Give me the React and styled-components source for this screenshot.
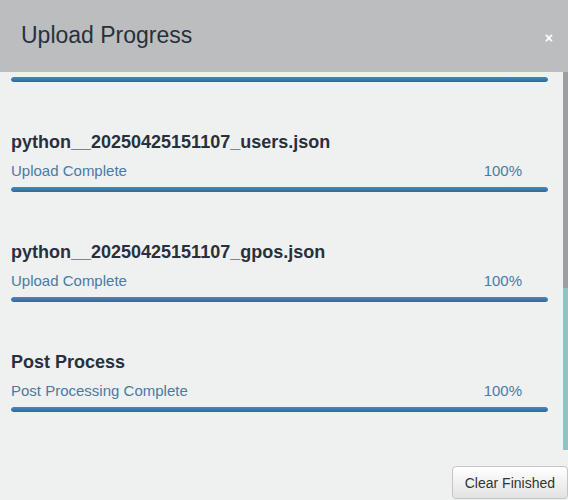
import React from 'react';
import styled, { createGlobalStyle } from 'styled-components';

const GlobalStyle = createGlobalStyle`
  html, body {
    margin: 0;
    padding: 0;
    background: #eff0f0;
  }
  body {
    font-family: "Liberation Sans", Arial, sans-serif;
  }
`;

const Page = styled.div`
  width: 568px;
  height: 500px;
  display: flex;
  flex-direction: column;
  background: #eff0f0;
  overflow: hidden;
`;

const Header = styled.div`
  height: 72px;
  flex: none;
  display: flex;
  align-items: center;
  justify-content: space-between;
  padding: 0 15px 2px 21px;
  background: #bcbdbf;
  box-sizing: border-box;
`;

const Title = styled.h4`
  margin: 0;
  font-size: 23px;
  font-weight: 400;
  color: #27313d;
  line-height: 1;
`;

const Close = styled.button`
  border: none;
  background: none;
  padding: 0;
  margin-top: 6px;
  color: #ffffff;
  font-family: "Liberation Sans", Arial, sans-serif;
  font-size: 14px;
  font-weight: 700;
  line-height: 1;
  cursor: pointer;
`;

const Main = styled.div`
  flex: none;
  height: 378px;
  display: flex;
`;

const List = styled.div`
  flex: 1;
  padding: 5px 15px 0 11px;
`;

const Strip = styled.div`
  width: 5px;
  display: flex;
  flex-direction: column;
`;

const StripPart = styled.div`
  height: ${p => p.$h}px;
  background: ${p => p.$color};
`;

const Item = styled.div`
  padding-top: ${p => (p.$first ? 0 : 50)}px;
`;

const ItemName = styled.div`
  font-size: 18px;
  font-weight: 700;
  color: #27313d;
  line-height: 20px;
`;

const StatusRow = styled.div`
  display: flex;
  justify-content: space-between;
  margin: 10px 0 7px;
  padding-right: 26px;
  font-size: 15px;
  color: #4b7aa1;
  line-height: 18px;
`;

const Track = styled.div`
  height: 5px;
  border-radius: 3px;
  background: #dfe3e6;
  overflow: hidden;
`;

const Fill = styled.div`
  height: 100%;
  background: linear-gradient(to bottom, #4a86bd, #2f69a0);
  border-radius: 3px;
`;

const Footer = styled.div`
  flex: 1;
  display: flex;
  justify-content: flex-end;
  align-items: flex-end;
  padding-bottom: 1px;
`;

const Button = styled.button`
  height: 33px;
  padding: 0 12px;
  font-family: "Liberation Sans", Arial, sans-serif;
  font-size: 14px;
  color: #333;
  border: 1px solid #c6c6c6;
  border-radius: 4px;
  background: linear-gradient(to bottom, #ffffff, #e2e2e2);
  cursor: pointer;
`;

const items = [
  { name: 'python__20250425151107_users.json', status: 'Upload Complete', pct: 100 },
  { name: 'python__20250425151107_gpos.json', status: 'Upload Complete', pct: 100 },
  { name: 'Post Process', status: 'Post Processing Complete', pct: 100 },
];

function Progress({ pct }) {
  return (
    <Track>
      <Fill style={{ width: `${pct}%` }} />
    </Track>
  );
}

export default function App() {
  return (
    <Page>
      <GlobalStyle />
      <Header>
        <Title>Upload Progress</Title>
        <Close>×</Close>
      </Header>
      <Main>
        <List>
          <Item $first>
            <Progress pct={100} />
          </Item>
          {items.map((it, i) => (
            <Item key={i}>
              <ItemName>{it.name}</ItemName>
              <StatusRow>
                <span>{it.status}</span>
                <span>{it.pct}%</span>
              </StatusRow>
              <Progress pct={it.pct} />
            </Item>
          ))}
        </List>
        <Strip>
          <StripPart $h={216} $color="#9d9ea1" />
          <StripPart $h={162} $color="#8fc3c4" />
        </Strip>
      </Main>
      <Footer>
        <Button>Clear Finished</Button>
      </Footer>
    </Page>
  );
}
